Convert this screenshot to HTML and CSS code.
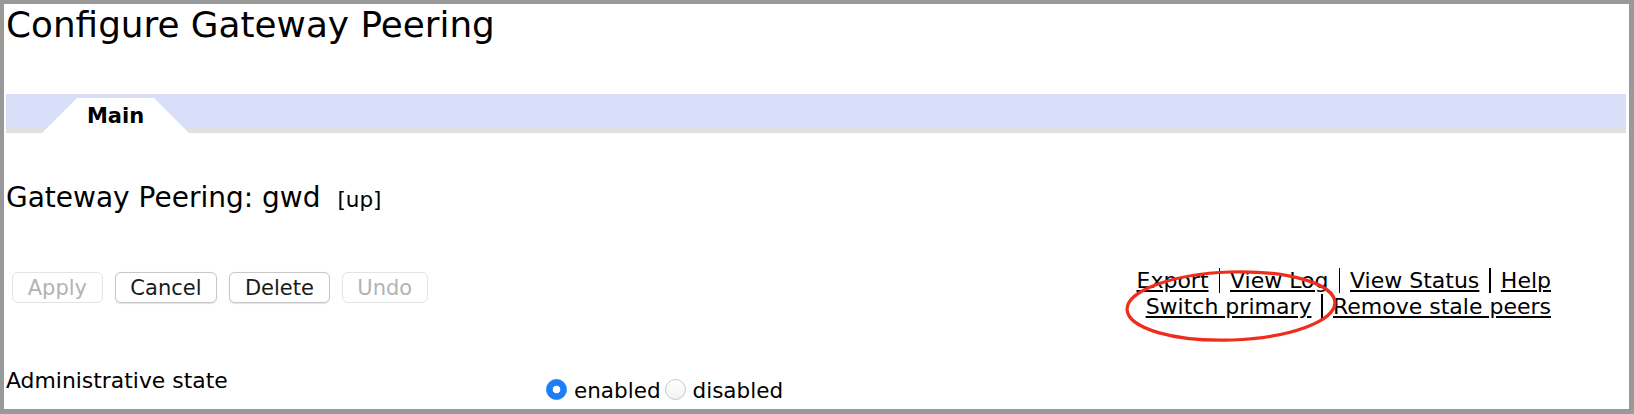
FILE: index.html
```html
<!DOCTYPE html>
<html lang="en">
<head>
<meta charset="utf-8">
<title>Configure Gateway Peering</title>
<link rel="stylesheet" href="styles.css">
</head>
<body>
<div class="frame">
  <h1 class="title">Configure Gateway Peering</h1>
  <div class="tabbar">
    <div class="tab">Main</div>
  </div>
  <h2 class="heading">Gateway Peering: gwd <span class="state">[up]</span></h2>
  <div class="actions">
    <div class="buttons">
      <button class="btn" disabled>Apply</button>
      <button class="btn">Cancel</button>
      <button class="btn">Delete</button>
      <button class="btn" disabled>Undo</button>
    </div>
    <div class="links">
      <div class="link-row"><a href="#">Export</a><span class="sep"></span><a href="#">View Log</a><span class="sep"></span><a href="#">View Status</a><span class="sep"></span><a href="#">Help</a></div>
      <div class="link-row"><a href="#">Switch primary</a><span class="sep"></span><a href="#">Remove stale peers</a></div>
      <svg class="annotation" width="230" height="80" viewBox="0 0 230 80">
        <ellipse cx="116" cy="38" rx="104" ry="34" transform="rotate(-2 116 38)" fill="none" stroke="#ee2d1c" stroke-width="3.2"/>
      </svg>
    </div>
  </div>
  <div class="field">
    <div class="field-label">Administrative state</div>
    <div class="field-value">
      <label class="choice"><input type="radio" name="admin" class="radio" checked><span class="choice-text">enabled</span></label>
      <label class="choice"><input type="radio" name="admin" class="radio"><span class="choice-text">disabled</span></label>
    </div>
  </div>
</div>
</body>
</html>
```
FILE: styles.css
```css
html, body {
  margin: 0;
  padding: 0;
  background: #fff;
}
body {
  font-family: "DejaVu Sans", Verdana, sans-serif;
  font-size: 21.5px;
  color: #000;
}
.frame {
  width: 1634px;
  height: 414px;
  box-sizing: border-box;
  border-style: solid;
  border-color: #999;
  border-width: 4px 5px 5px 4px;
  padding: 0 3px 0 2px;
  overflow: hidden;
  background: #fff;
}
.title {
  margin: 0;
  font-size: 35.8px;
  font-weight: normal;
  line-height: 41px;
}
.tabbar {
  margin-top: 49px;
  height: 39px;
  display: flex;
  background: linear-gradient(#d9dff8 0, #d9dff8 34px, #e0e0e0 34px, #e0e0e0 39px);
}
.tab {
  margin-left: 36px;
  margin-top: 4px;
  width: 147px;
  height: 35px;
  box-sizing: border-box;
  padding-top: 7px;
  background: #fff;
  clip-path: polygon(35px 0, 112px 0, 100% 100%, 0 100%);
  font-size: 21px;
  font-weight: bold;
  line-height: 23px;
  text-align: center;
}
.heading {
  margin: 48px 0 0;
  font-size: 28px;
  font-weight: normal;
  line-height: 33px;
}
.state {
  font-size: 21.5px;
  margin-left: 8px;
}
.actions {
  margin-top: 52px;
  display: flex;
  justify-content: space-between;
  align-items: flex-start;
}
.buttons {
  display: flex;
  gap: 12px;
  margin-top: 4px;
  margin-left: 6px;
}
.btn {
  height: 31px;
  box-sizing: border-box;
  padding: 2px 14.7px 0;
  border: 1px solid #c8c8c8;
  border-radius: 6px;
  background: #fff;
  box-shadow: 0 0.5px 1px rgba(0,0,0,0.12);
  font-family: "DejaVu Sans", Verdana, sans-serif;
  font-size: 21px;
  color: #1a1a1a;
  line-height: 1;
}
.btn:disabled {
  border-color: #e4e4e4;
  box-shadow: none;
  color: #b3b3b3;
}
.links {
  position: relative;
  margin-right: 75px;
  text-align: right;
  font-size: 22px;
  line-height: 26px;
}
.links a {
  color: #000;
  text-decoration: underline;
}
.sep {
  display: inline-block;
  width: 1.5px;
  height: 25px;
  margin: 0 10px;
  background: #000;
  vertical-align: -5px;
}
.annotation {
  position: absolute;
  right: 206px;
  top: 0;
  overflow: visible;
}
.field {
  margin-top: 48px;
  display: flex;
  align-items: flex-start;
}
.field-label {
  width: 540px;
  font-size: 21.9px;
  line-height: 25px;
}
.field-value {
  padding-top: 9px;
  display: flex;
  align-items: center;
  line-height: 25px;
}
.choice {
  display: flex;
  align-items: center;
}
.radio {
  appearance: none;
  -webkit-appearance: none;
  width: 21px;
  height: 21px;
  margin: 0;
  border-radius: 50%;
  box-sizing: border-box;
  border: 1px solid #c6c6c6;
  background: linear-gradient(#ffffff, #f2f2f2);
}
.radio:checked {
  border-color: #1b7ef6;
  background: radial-gradient(circle, #fff 0, #fff 3.5px, #1b7ef6 4.2px);
}
.choice-text {
  margin-left: 7px;
  margin-right: 4px;
  position: relative;
  top: 1px;
}
```
